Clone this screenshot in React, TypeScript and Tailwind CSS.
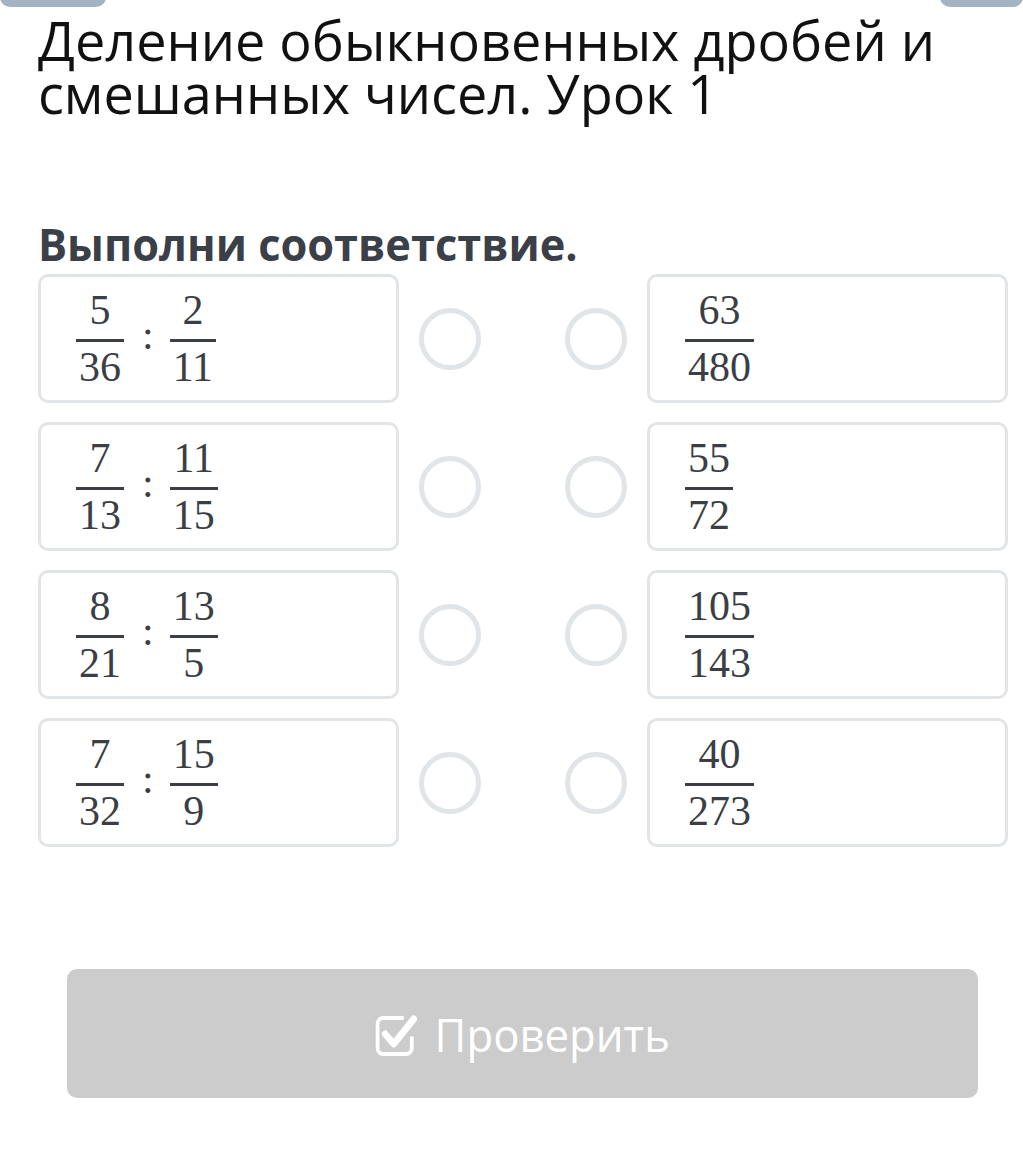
import React from "react";

type F = { n: string; d: string };

function Frac({ f }: { f: F }) {
  return (
    <span className="inline-flex flex-col items-center">
      <span className="leading-[46px] pb-[6px] px-[3px]">{f.n}</span>
      <span className="h-[2.5px] w-full bg-[#3b3f45]" />
      <span className="leading-[46px] pt-[2px] px-[3px]">{f.d}</span>
    </span>
  );
}

const left: [F, F][] = [
  [{ n: "5", d: "36" }, { n: "2", d: "11" }],
  [{ n: "7", d: "13" }, { n: "11", d: "15" }],
  [{ n: "8", d: "21" }, { n: "13", d: "5" }],
  [{ n: "7", d: "32" }, { n: "15", d: "9" }],
];
const right: F[] = [
  { n: "63", d: "480" },
  { n: "55", d: "72" },
  { n: "105", d: "143" },
  { n: "40", d: "273" },
];

const serif = { fontFamily: '"Liberation Serif", "DejaVu Serif", serif' };

export default function App() {
  return (
    <div className="relative w-[1023px] h-[1175px] bg-white overflow-hidden text-[#3b3f45]" style={{ fontFamily: '"Open Sans", sans-serif' }}>
      <div className="absolute left-0 top-[-20px] w-[106px] h-[27px] rounded-[10px] bg-[#a3b3c2]" />
      <div className="absolute right-0 top-[-20px] w-[83px] h-[27px] rounded-[10px] bg-[#a3b3c2]" />
      <div className="pl-[38px] pr-[20px] pt-[14px]">
        <h1 className="text-[54px] leading-[53px] text-[#111111] font-normal">
          Деление обыкновенных дробей и<br />смешанных чисел. Урок 1
        </h1>
        <h2 className="mt-[102px] origin-left scale-x-[0.985] text-[44px] leading-[44px] font-bold text-[#3b3f47]">Выполни соответствие.</h2>
        <div className="mt-[8px] flex flex-col gap-[19px] w-[970px]">
          {left.map((pair, i) => (
            <div key={i} className="flex items-center">
              <div className="w-[361px] h-[129px] rounded-[10px] border-[3px] border-[#e2e5e8] flex items-center pl-[35px] text-[42px]" style={serif}>
                <Frac f={pair[0]} />
                <span className="ml-[18px] mr-[16px] mb-[6px]">:</span>
                <Frac f={pair[1]} />
              </div>
              <div className="ml-[20px] w-[62px] h-[62px] rounded-full border-[5px] border-[#e2e5e8]" />
              <div className="ml-[84px] w-[62px] h-[62px] rounded-full border-[5px] border-[#e2e5e8]" />
              <div className="ml-[20px] w-[361px] h-[129px] rounded-[10px] border-[3px] border-[#e2e5e8] flex items-center pl-[35px] text-[42px]" style={serif}>
                <Frac f={right[i]} />
              </div>
            </div>
          ))}
        </div>
      </div>
      <div className="ml-[67px] mt-[122px] w-[911px] h-[129px] rounded-[10px] bg-[#cccccc] flex items-center justify-center text-white">
        <div className="flex items-center gap-[18px] scale-x-[0.95] mr-[2px]">
          <svg width="46" height="44" viewBox="0 0 46 44" fill="none">
            <path d="M30 6 H10 A6 6 0 0 0 4 12 V36 A6 6 0 0 0 10 42 H34 A6 6 0 0 0 40 36 V26" stroke="white" strokeWidth="4" fill="none" strokeLinecap="round" />
            <path d="M12 22 L21 32 L42 7" stroke="white" strokeWidth="7" strokeLinecap="round" strokeLinejoin="round" fill="none" />
          </svg>
          <span className="text-[46px] leading-[50px]">Проверить</span>
        </div>
      </div>
    </div>
  );
}
